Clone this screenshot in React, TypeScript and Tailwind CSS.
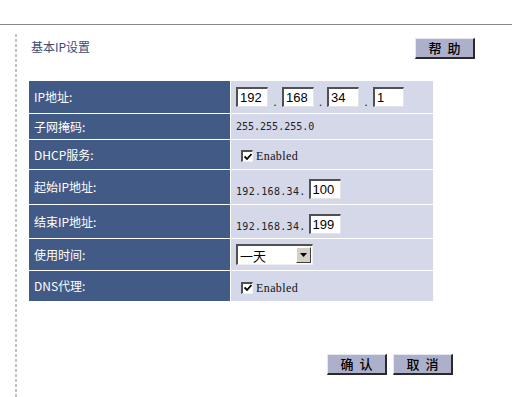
import React from "react";

const Input = ({ value, w = "w-[32px]" }: { value: string; w?: string }) => (
  <div
    className={`${w} h-[20px] bg-white border-t-2 border-l-2 border-t-[#505050] border-l-[#505050] border-b border-r border-b-[#e4e4e4] border-r-[#e4e4e4] pl-[2px] text-[13px] leading-[17px] text-black font-['Liberation_Sans',sans-serif]`}
  >
    {value}
  </div>
);

const Check = () => (
  <div className="w-[12px] h-[12px] bg-white border-t-2 border-l-2 border-t-[#505050] border-l-[#505050] border-b border-r border-b-[#f0f0f0] border-r-[#f0f0f0] flex items-center justify-center">
    <svg width="8" height="8" viewBox="0 0 8 8">
      <path d="M0.5 3.5 L3 6 L7.5 1" stroke="#000" strokeWidth="1.8" fill="none" />
    </svg>
  </div>
);

const Button = ({ a, b }: { a: string; b: string }) => (
  <div className="w-[60px] h-[21px] bg-[#adb0ca] border-t border-l border-t-[#e6e7f0] border-l-[#e6e7f0] border-b-2 border-r-2 border-b-[#2a2a2a] border-r-[#2a2a2a] flex items-center justify-center gap-[6px] text-[13px] font-medium text-black">
    <span>{a}</span>
    <span>{b}</span>
  </div>
);

const mono = "font-['DejaVu_Sans_Mono',monospace] text-[10px] text-[#222]";
const enabled = "font-['Liberation_Serif',serif] text-[12px] tracking-[0.4px] text-[#111]";

export default function App() {
  const rows: { label: string; h: string; content: React.ReactNode }[] = [
    {
      label: "IP地址:",
      h: "h-[32px]",
      content: (
        <div className="flex items-end">
          <Input value="192" />
          <span className="w-[14px] text-center text-[11px] leading-[12px] text-[#222]">.</span>
          <Input value="168" />
          <span className="w-[13px] text-center text-[11px] leading-[12px] text-[#222]">.</span>
          <Input value="34" />
          <span className="w-[14px] text-center text-[11px] leading-[12px] text-[#222]">.</span>
          <Input value="1" w="w-[31px]" />
        </div>
      ),
    },
    {
      label: "子网掩码:",
      h: "h-[25px]",
      content: <span className={mono}>255.255.255.0</span>,
    },
    {
      label: "DHCP服务:",
      h: "h-[29px]",
      content: (
        <div className="flex items-center pl-[5px] pt-[3px] gap-[3px]">
          <Check />
          <span className={enabled}>Enabled</span>
        </div>
      ),
    },
    {
      label: "起始IP地址:",
      h: "h-[34px]",
      content: (
        <div className="flex items-end pt-[4px] gap-[3px]">
          <span className={`${mono} tracking-[0.3px] leading-[14px]`}>192.168.34.</span>
          <Input value="100" />
        </div>
      ),
    },
    {
      label: "结束IP地址:",
      h: "h-[33px]",
      content: (
        <div className="flex items-end pt-[4px] gap-[3px]">
          <span className={`${mono} tracking-[0.3px] leading-[14px]`}>192.168.34.</span>
          <Input value="199" />
        </div>
      ),
    },
    {
      label: "使用时间:",
      h: "h-[31px]",
      content: (
        <div className="w-[77px] h-[21px] bg-white border-t-2 border-l-2 border-t-[#505050] border-l-[#505050] border-b border-r border-b-[#f0f0f0] border-r-[#f0f0f0] flex items-center justify-between pr-[1px]">
          <span className="pl-[2px] text-[13px] text-black leading-[17px]">一天</span>
          <div className="w-[15px] h-[16px] bg-[#d4d0c8] border-t border-l border-t-white border-l-white border-b border-r border-b-[#404040] border-r-[#404040] flex items-center justify-center">
            <svg width="7" height="4" viewBox="0 0 7 4">
              <path d="M0 0 H7 L3.5 4 Z" fill="#000" />
            </svg>
          </div>
        </div>
      ),
    },
    {
      label: "DNS代理:",
      h: "h-[30px]",
      content: (
        <div className="flex items-center pl-[5px] pt-[3px] gap-[3px]">
          <Check />
          <span className={enabled}>Enabled</span>
        </div>
      ),
    },
  ];

  return (
    <div className="w-[512px] h-[397px] bg-white overflow-hidden font-['Noto_Sans_CJK_SC','Noto_Sans',sans-serif]">
      <div className="h-[24px]" />
      <div className="border-t border-[#8a8a8a] flex h-[373px]">
        <div className="w-[15px]" />
        <div className="w-[2px] mt-[9px] bg-[repeating-linear-gradient(to_bottom,#c4c4c4_0px,#c4c4c4_3px,transparent_3px,transparent_5px)]" />
        <div className="ml-[12px] w-[446px] flex flex-col">
          <div className="mt-[13px] h-[20px] flex justify-between items-center">
            <span className="pl-[2px] text-[12px] text-[#3e4b6e] leading-[14px] -mt-[3px]">基本IP设置</span>
            <Button a="帮" b="助" />
          </div>
          <div className="mt-[23px] w-[404px] bg-white grid grid-cols-[201px_202px] gap-px">
            {rows.map((r) => (
              <React.Fragment key={r.label}>
                <div className={`${r.h} bg-[#425a86] flex items-center pl-[5px] text-[12px] text-white`}>{r.label}</div>
                <div className={`${r.h} bg-[#d5d8e8] flex items-center pl-[5px]`}>{r.content}</div>
              </React.Fragment>
            ))}
          </div>
          <div className="mt-[53px] flex justify-end pr-[22px] gap-[6px]">
            <Button a="确" b="认" />
            <Button a="取" b="消" />
          </div>
        </div>
      </div>
    </div>
  );
}
